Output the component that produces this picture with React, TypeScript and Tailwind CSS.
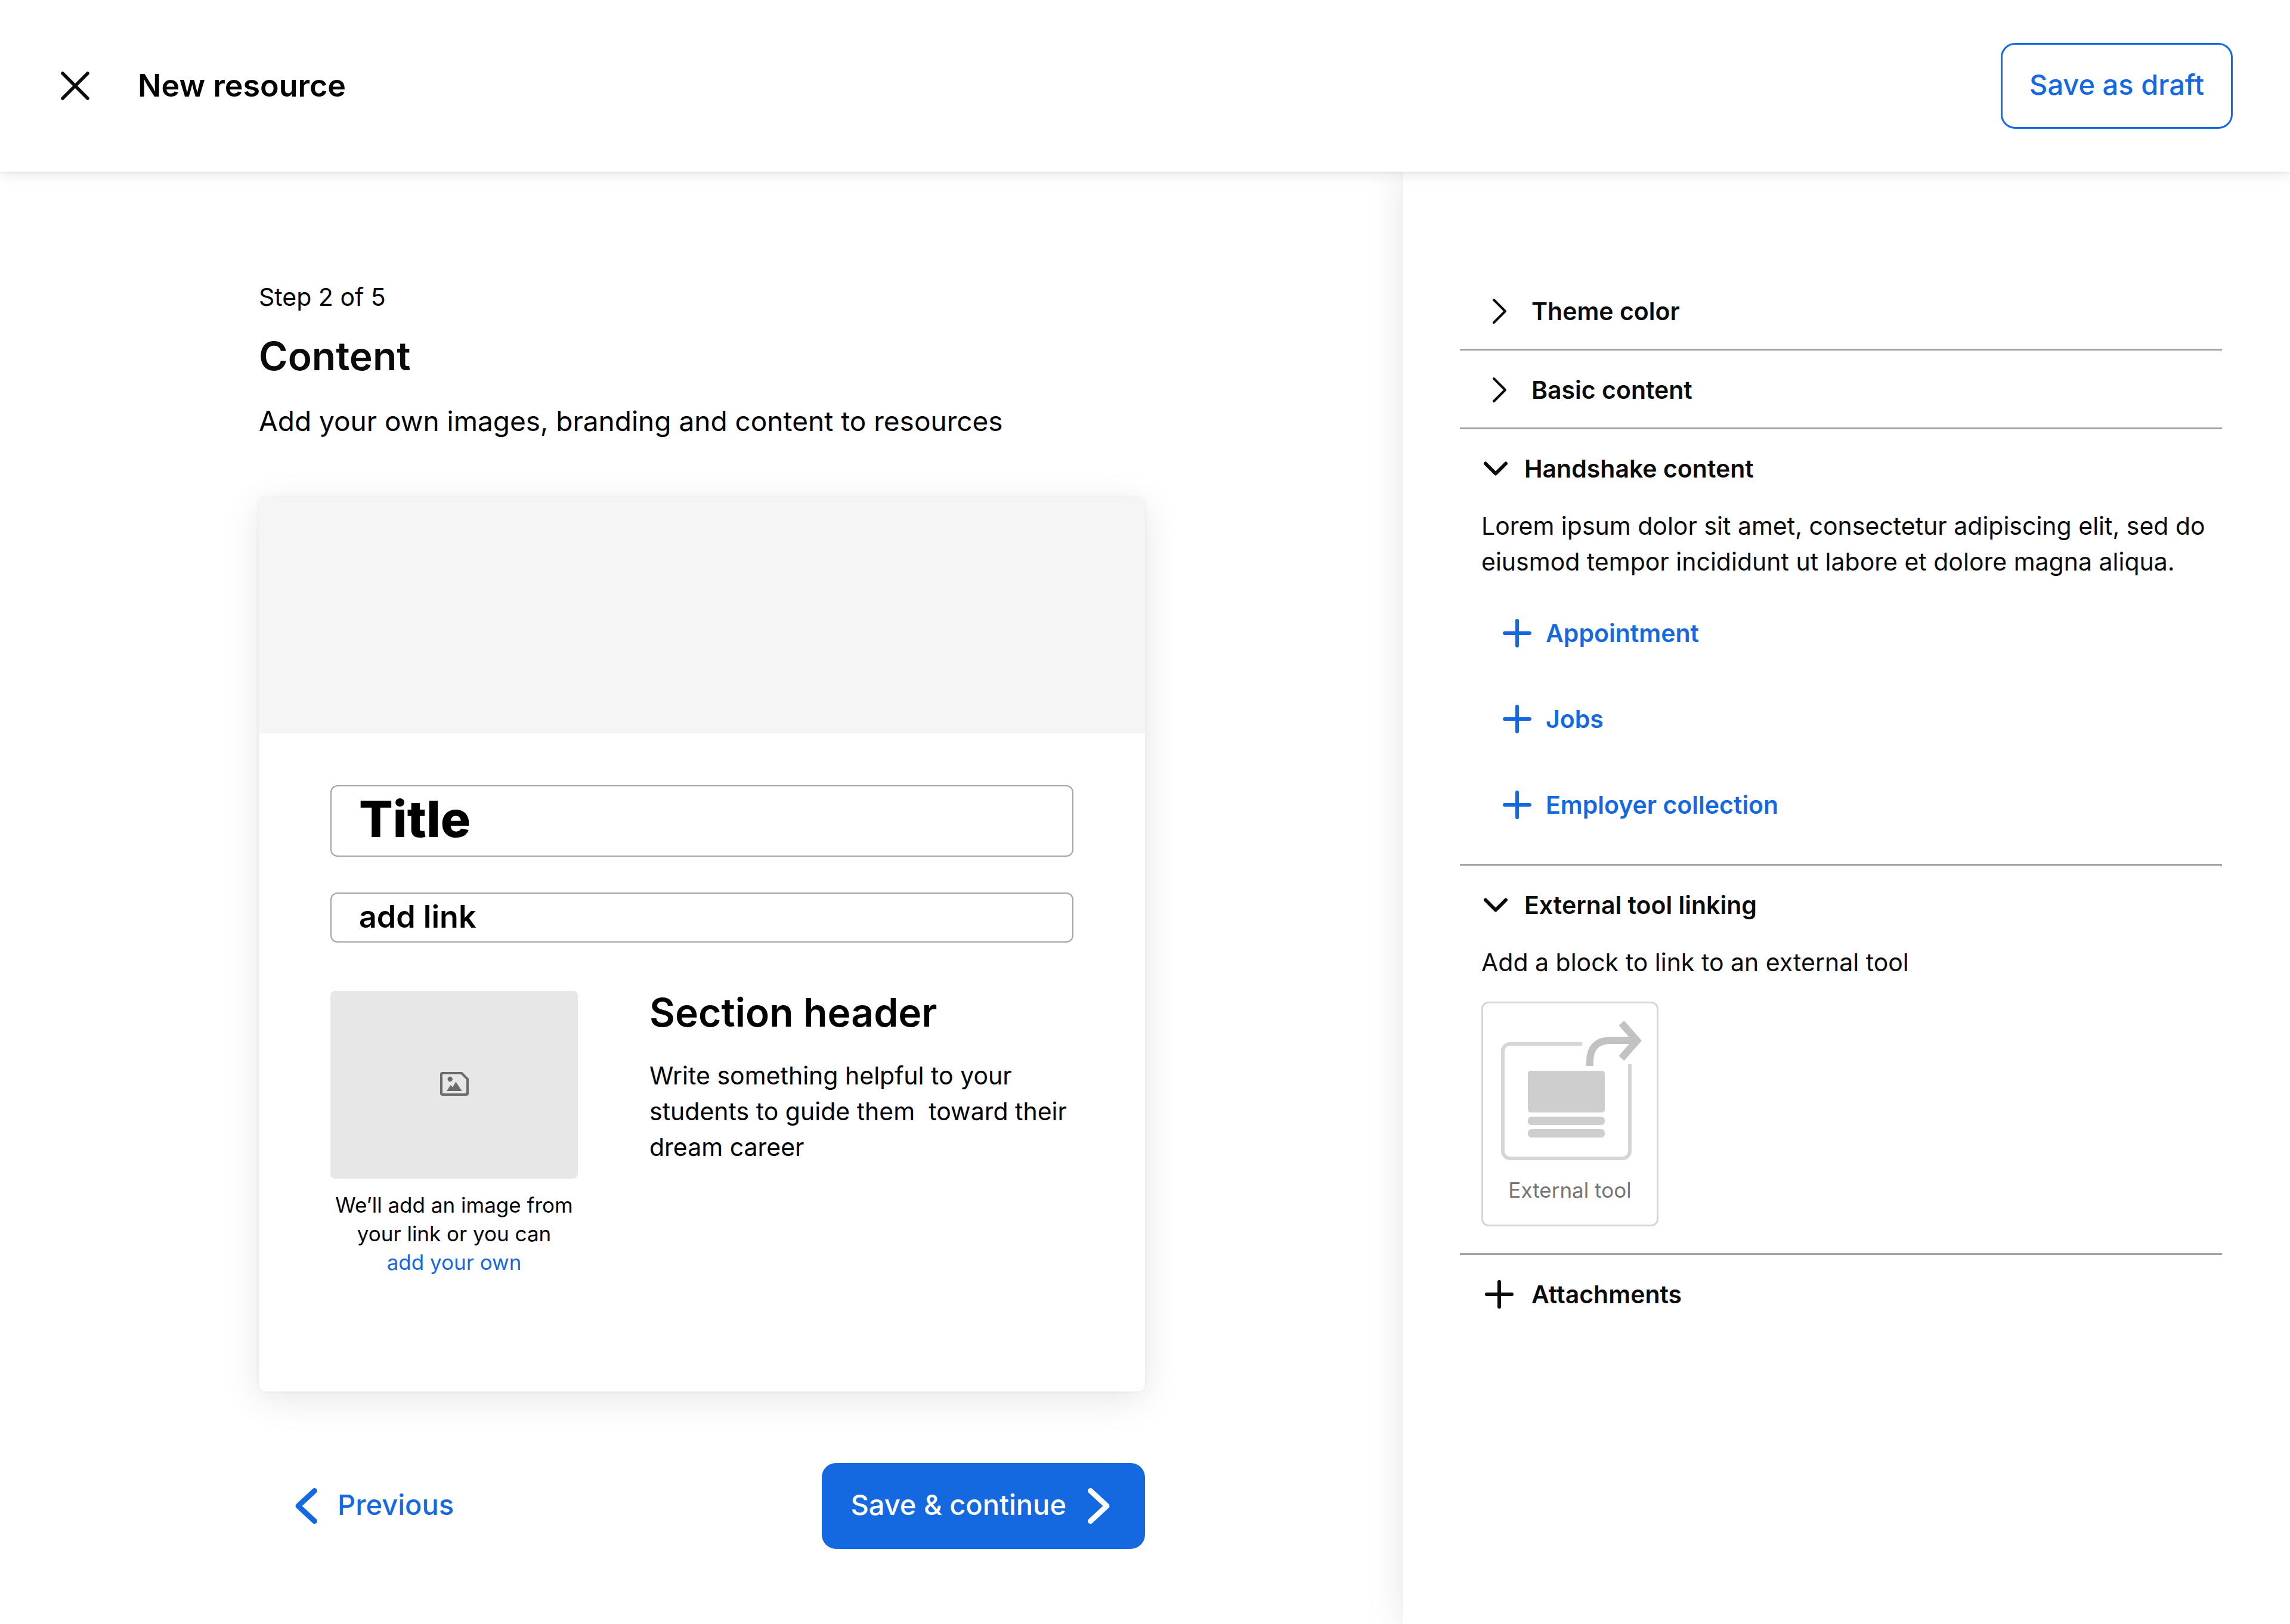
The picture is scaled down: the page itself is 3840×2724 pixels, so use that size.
import { useState } from "react";
import type { ReactNode } from "react";

const CloseIcon = () => (
  <svg className="size-15" viewBox="0 0 60 60" fill="none" stroke="#0b0b0b" strokeWidth="5.5" strokeLinecap="round">
    <path d="M9 9l42 42M51 9L9 51" />
  </svg>
);

const ChevronRight = () => (
  <svg className="size-15" viewBox="0 0 60 60" fill="none" stroke="#0b0b0b" strokeWidth="4" strokeLinecap="round" strokeLinejoin="round">
    <path d="M21 11l19 19-19 19" />
  </svg>
);

const ChevronDown = () => (
  <svg className="size-12" viewBox="0 0 48 48" fill="none" stroke="#0b0b0b" strokeWidth="6" strokeLinecap="round" strokeLinejoin="round">
    <path d="M7 15.5l17 17 17-17" />
  </svg>
);

const PlusIcon = ({ className }: { className: string }) => (
  <svg className={className} viewBox="0 0 48 48" fill="none" stroke="currentColor" strokeWidth="6" strokeLinecap="round">
    <path d="M24 3v42M3 24h42" />
  </svg>
);

const ArrowIcon = ({ d }: { d: string }) => (
  <svg className="h-15 w-[38px]" viewBox="0 0 38 60" fill="none" stroke="currentColor" strokeWidth="9" strokeLinecap="round" strokeLinejoin="round">
    <path d={d} />
  </svg>
);

const ImageIcon = () => (
  <svg className="h-10 w-12" viewBox="0 0 48 40" fill="none">
    <path d="M4 2h32l10 10v24a2 2 0 0 1-2 2H4a2 2 0 0 1-2-2V4a2 2 0 0 1 2-2z" stroke="#6b6b6b" strokeWidth="4" />
    <circle cx="16.7" cy="12" r="4.2" fill="#6b6b6b" />
    <path d="M11 32l6.5-10 3.5 3.5 5.5-9L36.5 32z" fill="#6b6b6b" />
  </svg>
);

const ExternalToolArt = () => (
  <svg className="h-60 w-[246px]" viewBox="0 0 246 240" fill="none">
    <path d="M143 41H22a12 12 0 0 0-12 12v168a12 12 0 0 0 12 12h189a12 12 0 0 0 12-12V75" stroke="#d6d6d6" strokeWidth="6" />
    <rect x="52" y="86" width="129" height="70" rx="5" fill="#cecece" />
    <rect x="52" y="163" width="129" height="14" rx="6" fill="#cecece" />
    <rect x="52" y="184" width="129" height="14" rx="6" fill="#cecece" />
    <path d="M156 78v-7c0-24 12-36 35-36h42M209 6l26 29.5L209 65" stroke="#c2c2c2" strokeWidth="12" />
  </svg>
);

type SectionProps = {
  title: string;
  defaultOpen?: boolean;
  children?: ReactNode;
};

const Section = ({ title, defaultOpen = false, children }: SectionProps) => {
  const [open, setOpen] = useState(defaultOpen);

  return (
    <section className="border-t-3 border-[#a3a3a3] pt-9 pb-[33px] pl-9 first:border-t-0">
      <button
        type="button"
        aria-expanded={open}
        onClick={() => setOpen(!open)}
        className="flex h-15 w-full items-center gap-6 text-left text-[41px] leading-[60px] font-semibold"
      >
        {open ? <ChevronDown /> : <ChevronRight />}
        {title}
      </button>
      {open && children}
    </section>
  );
};

const handshakeItems = ["Appointment", "Jobs", "Employer collection"];

const Sidebar = () => (
  <aside className="w-[38.75%] shrink-0 pt-[168px] pr-[114px] pl-24 text-[#0b0b0b] shadow-[0_0_60px_rgba(0,0,0,0.1),0_0_6px_rgba(0,0,0,0.04)]">
    <Section title="Theme color" />
    <Section title="Basic content" />
    <Section title="Handshake content" defaultOpen>
      <p className="mt-9 text-[41px] leading-[60px]">
        Lorem ipsum dolor sit amet, consectetur adipiscing elit, sed do eiusmod tempor incididunt ut labore et dolore magna aliqua.
      </p>
      <div className="mt-15 mb-9 ml-9 flex flex-col items-start gap-[84px]">
        {handshakeItems.map((item) => (
          <button key={item} type="button" className="flex h-15 items-center gap-6 text-[41px] leading-[60px] font-semibold text-[#1569e0]">
            <PlusIcon className="size-12" />
            {item}
          </button>
        ))}
      </div>
    </Section>
    <Section title="External tool linking" defaultOpen>
      <p className="mt-9 text-[41px] leading-[60px]">Add a block to link to an external tool</p>
      <button
        type="button"
        className="mt-9 mb-3 flex h-[377px] w-[297px] flex-col items-center rounded-xl border-3 border-[#d6d6d6] pt-[27px] text-[35px] leading-[48px] text-[#757575]"
      >
        <ExternalToolArt />
        <span className="mt-[22px]">External tool</span>
      </button>
    </Section>
    <section className="border-t-3 border-[#a3a3a3] pt-9 pl-9">
      <button type="button" className="flex h-15 items-center gap-6 text-[41px] leading-[60px] font-semibold">
        <PlusIcon className="mx-1.5 size-12" />
        Attachments
      </button>
    </section>
  </aside>
);

const ResourceCard = () => (
  <div className="mt-24 overflow-hidden rounded-xl bg-white shadow-[0_12px_60px_rgba(0,0,0,0.1),0_0_6px_rgba(0,0,0,0.06)]">
    <div className="h-[396px] bg-[#f5f5f5]" />
    <div className="px-[120px] pt-[87px] pb-[193px]">
      <input
        aria-label="Title"
        defaultValue="Title"
        className="block h-[120px] w-full rounded-xl border-2 border-[#a3a3a3] px-[46px] pb-1.5 text-[84px] font-extrabold"
      />
      <input
        aria-label="Link"
        defaultValue="add link"
        className="mt-15 block h-[84px] w-full rounded-xl border-2 border-[#a3a3a3] px-[46px] pb-1 text-[52px] font-semibold"
      />
      <div className="mt-[81px] flex gap-[120px]">
        <div className="w-[415px] shrink-0">
          <div className="flex h-[315px] items-center justify-center rounded-lg bg-[#e7e7e7] pb-1">
            <ImageIcon />
          </div>
          <p className="mt-5 text-center text-[35px] leading-[48px] whitespace-nowrap">
            We’ll add an image from
            <br />
            your link or you can
            <br />
            <a href="#" className="text-[#1569e0]">
              add your own
            </a>
          </p>
        </div>
        <div>
          <h2 className="text-[66px] leading-[72px] font-semibold">Section header</h2>
          <p className="mt-10 text-[41px] leading-[60px] whitespace-pre-line">
            Write something helpful to your{"\n"}students to guide them&nbsp; toward their{"\n"}dream career
          </p>
        </div>
      </div>
    </div>
  </div>
);

export default function App() {
  return (
    <div className="flex min-h-screen flex-col bg-white font-[Inter,sans-serif] text-black">
      <header className="z-10 flex h-72 items-center bg-white px-24 shadow-[0_3px_24px_rgba(0,0,0,0.1),0_0_6px_rgba(0,0,0,0.1)]">
        <button type="button" aria-label="Close">
          <CloseIcon />
        </button>
        <h1 className="ml-[75px] text-[52px] leading-[60px] font-semibold">New resource</h1>
        <button
          type="button"
          className="ml-auto h-36 rounded-3xl border-3 border-[#1569e0] px-[45px] pb-1 text-[47px] leading-[60px] font-medium text-[#1569e0]"
        >
          Save as draft
        </button>
      </header>
      <div className="flex flex-1">
        <main className="flex-1 pt-[180px] pb-[126px] pl-0.5">
          <div className="mx-auto w-full max-w-[1486px]">
            <p className="text-[41px] leading-[60px]">Step 2 of 5</p>
            <h2 className="mt-6 text-[66px] leading-[90px] font-semibold text-[#0b0b0b]">Content</h2>
            <p className="mt-8 text-[46px] leading-[64px]">Add your own images, branding and content to resources</p>
            <ResourceCard />
            <div className="mt-[120px] flex items-center justify-between text-[47px] leading-[60px] font-medium">
              <button type="button" className="ml-15 flex h-36 items-center gap-[34px] text-[#1569e0]">
                <ArrowIcon d="M33.5 4.5L6 30l27.5 25.5" />
                <span className="pb-1">Previous</span>
              </button>
              <button type="button" className="flex h-36 items-center gap-9 rounded-3xl bg-[#1569e0] pr-[58px] pl-12 text-white">
                <span className="pb-1">Save &amp; continue</span>
                <ArrowIcon d="M4.5 4.5L32 30 4.5 55.5" />
              </button>
            </div>
          </div>
        </main>
        <Sidebar />
      </div>
    </div>
  );
}
